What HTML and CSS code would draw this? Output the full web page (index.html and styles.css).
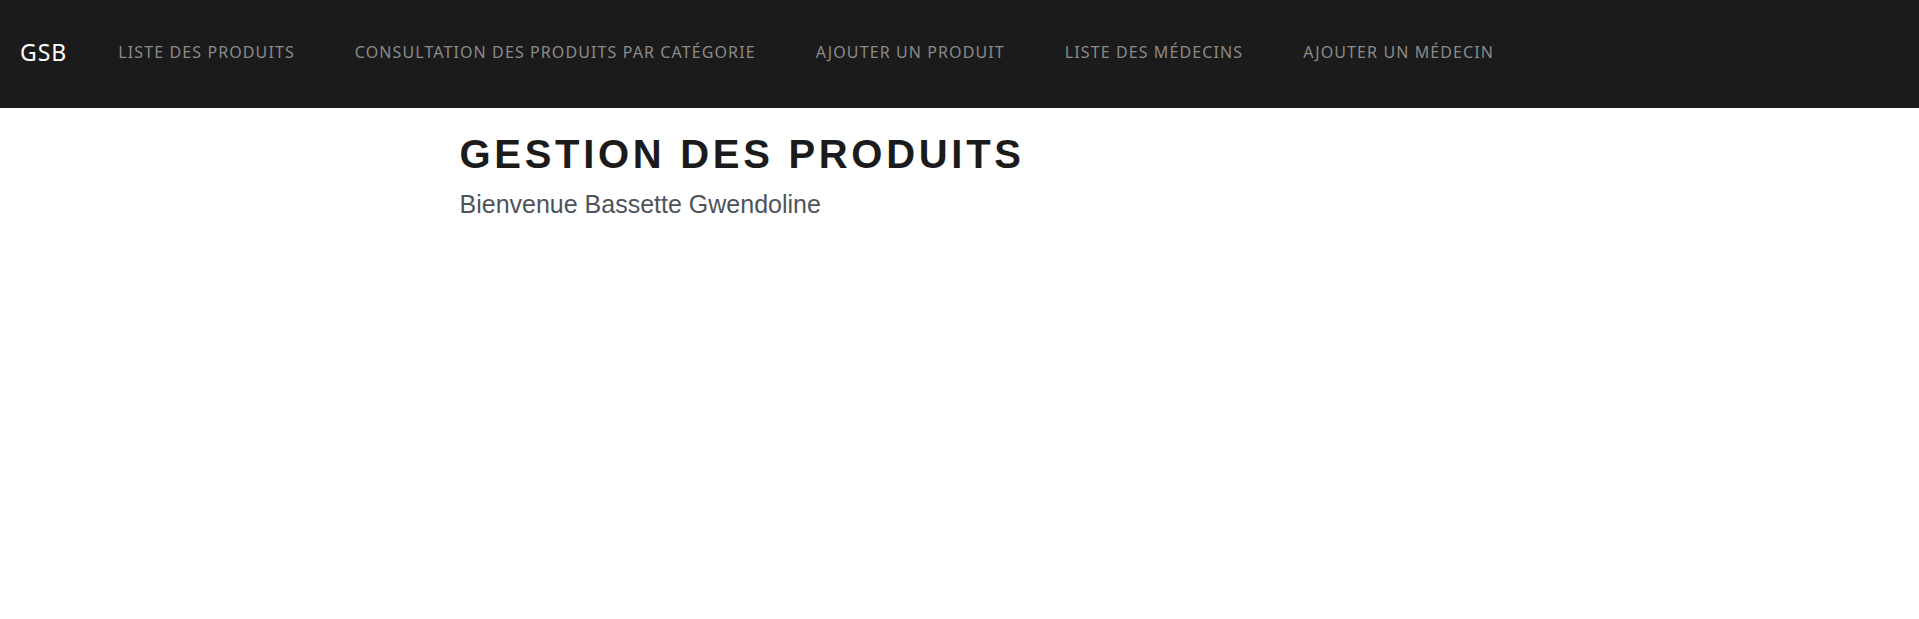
FILE: index.html
```
<!DOCTYPE html>
<html lang="fr">
<head>
<meta charset="utf-8">
<title>GSB</title>
<link rel="stylesheet" href="styles.css">
</head>
<body>
<nav class="navbar">
  <a class="brand" href="#">GSB</a>
  <ul class="nav-links">
    <li><a href="#">Liste des produits</a></li>
    <li><a href="#">Consultation des produits par catégorie</a></li>
    <li><a href="#">Ajouter un produit</a></li>
    <li><a href="#">Liste des médecins</a></li>
    <li><a href="#">Ajouter un médecin</a></li>
  </ul>
</nav>
<main class="container">
  <h1 class="title">Gestion des produits</h1>
  <p class="welcome">Bienvenue Bassette Gwendoline</p>
</main>
</body>
</html>
```

FILE: styles.css
```
html, body {
  margin: 0;
  padding: 0;
  background: #fff;
}

.navbar {
  display: flex;
  align-items: center;
  box-sizing: border-box;
  height: 108px;
  padding: 0 0 4px 20px;
  background: #1b1b1b;
  font-family: "Noto Sans", "Open Sans", sans-serif;
}

.brand {
  color: #fff;
  text-decoration: none;
  font-size: 23px;
  letter-spacing: 1px;
  margin-right: 21px;
}

.nav-links {
  display: flex;
  list-style: none;
  margin: 0;
  padding: 0;
}

.nav-links a {
  display: block;
  padding: 0 30px;
  color: #8a8a8a;
  text-decoration: none;
  text-transform: uppercase;
  font-size: 16px;
  letter-spacing: 1.1px;
}

.container {
  width: 1000px;
  margin: 0 auto;
  padding-top: 22px;
}

.title {
  margin: 0;
  font-family: "Liberation Sans", Arial, sans-serif;
  font-weight: 700;
  font-size: 40px;
  line-height: 1.2;
  letter-spacing: 3.7px;
  text-transform: uppercase;
  color: #1b1b1b;
}

.welcome {
  margin: 12px 0 0;
  font-family: "Liberation Sans", Arial, sans-serif;
  font-size: 25px;
  color: #4e535b;
}
```
